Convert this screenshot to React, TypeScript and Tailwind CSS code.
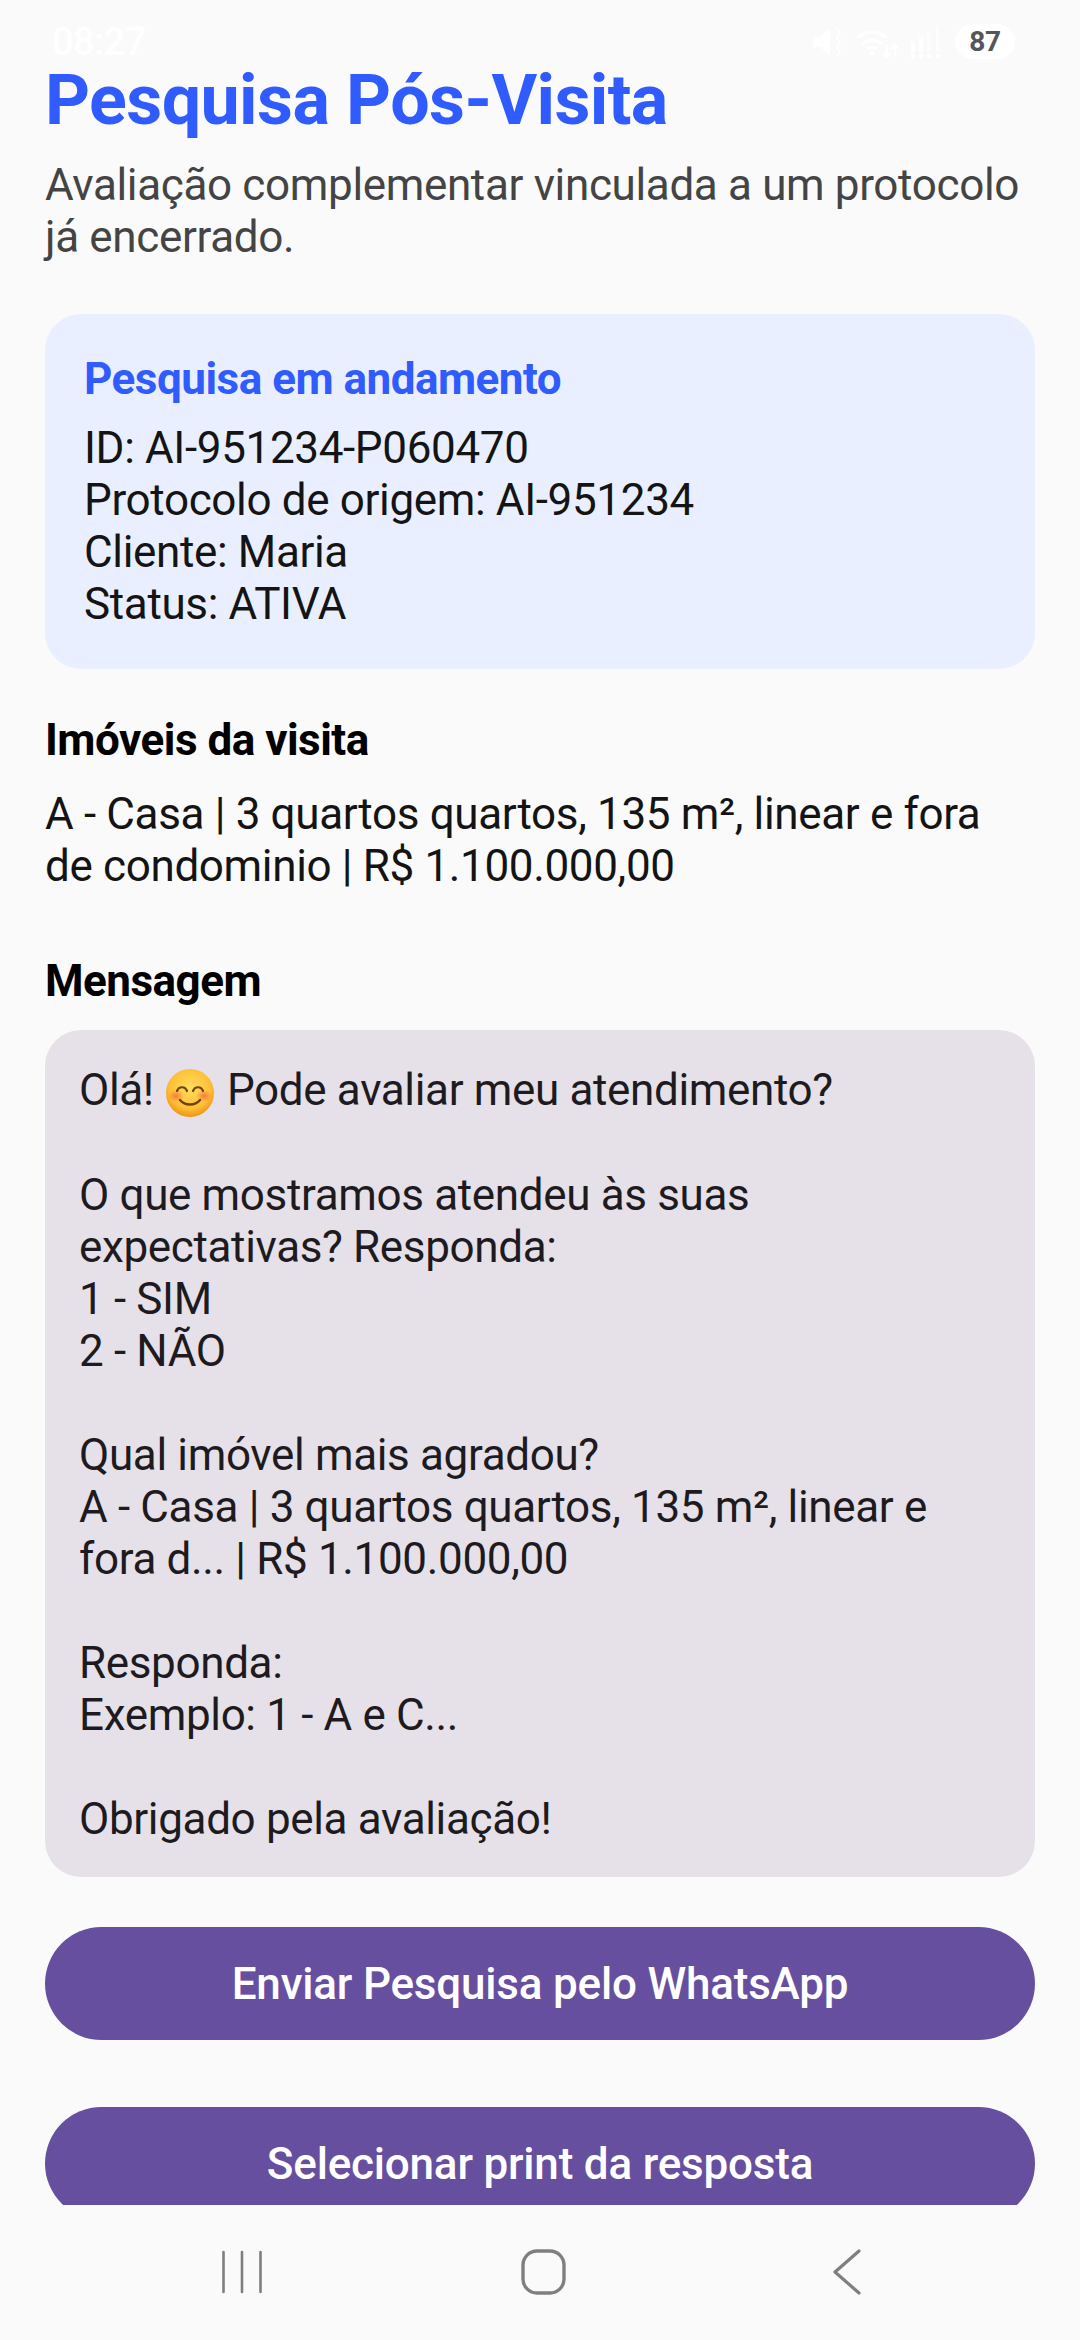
import type { ReactNode } from 'react';

// Smiling face with blush, sits inline in the message text
function SmileEmoji() {
  return (
    <svg viewBox="0 0 48 48" className="inline-block mx-[2px] w-[48px] h-[48px] align-[-12px]">
      <defs>
        <radialGradient id="face" cx="50%" cy="40%" r="60%">
          <stop offset="0%" stopColor="#ffdc5e" />
          <stop offset="72%" stopColor="#fdbf35" />
          <stop offset="100%" stopColor="#ee9216" />
        </radialGradient>
        <radialGradient id="blush">
          <stop offset="0%" stopColor="#f7693f" stopOpacity="0.8" />
          <stop offset="100%" stopColor="#f7693f" stopOpacity="0" />
        </radialGradient>
      </defs>
      <circle cx="24" cy="24" r="24" fill="url(#face)" />
      <ellipse cx="10" cy="27" rx="8" ry="6" fill="url(#blush)" />
      <ellipse cx="38" cy="27" rx="8" ry="6" fill="url(#blush)" />
      <path d="M11 22c2-5 8-5 10 0M27 22c2-5 8-5 10 0" fill="none" stroke="#6f4212" strokeWidth="2.2" strokeLinecap="round" />
      <path d="M14 31c5 6 15 6 20 0" fill="none" stroke="#6f4212" strokeWidth="2.4" strokeLinecap="round" />
    </svg>
  );
}

function StatusBar() {
  return (
    <div className="absolute inset-x-0 top-0 h-[83px] z-10 flex items-start justify-between pl-[52px] pr-[65px] pt-[24px]">
      <span className="text-[38px] leading-[36px] font-medium tracking-[-0.5px] text-white">08:27</span>
      <div className="flex items-center">
        {/* muted speaker */}
        <svg viewBox="0 0 32 32" className="w-[32px] h-[32px] text-white" fill="currentColor">
          <path d="M1 11h7l10-9v28L8 21H1z" />
          <path d="M24 2l4 5-3 4 3 5-3 5 3 5-3 4" fill="none" stroke="currentColor" strokeWidth="2" />
        </svg>
        {/* wifi 5 with activity arrows */}
        <svg viewBox="0 0 46 34" className="ml-[11px] w-[46px] h-[34px] text-white" fill="none" stroke="currentColor" strokeWidth="3">
          <path d="M2 13c9-8 21-8 30 0M7 19c6-5 14-5 20 0M12 24c3-2 7-2 10 0" />
          <circle cx="17" cy="28" r="2.5" fill="currentColor" stroke="none" />
          <path d="M32 20v12M28 28l4 4 4-4M40 32V20M36 24l4-4 4 4" strokeWidth="2" />
        </svg>
        {/* signal bars */}
        <svg viewBox="0 0 32 34" className="ml-[9px] w-[32px] h-[34px] text-white" fill="currentColor">
          <rect x="1" y="18" width="4" height="9" />
          <rect x="9" y="12" width="4" height="15" />
          <rect x="17" y="7" width="3" height="20" opacity="0.6" />
          <rect x="26" y="1" width="3" height="26" opacity="0.6" />
          <circle cx="3" cy="31" r="2" />
          <circle cx="11" cy="31" r="2" />
          <circle cx="19" cy="31" r="2" />
          <circle cx="28" cy="31" r="2" />
        </svg>
        <div className="ml-[13px] w-[60px] h-[35px] rounded-full bg-white flex items-center justify-center text-[28px] font-bold text-[#55555a] leading-none">
          87
        </div>
      </div>
    </div>
  );
}

function NavBar() {
  return (
    <div className="h-[135px] shrink-0 flex items-start pl-[222px] pt-[44px] text-[#7f7f7f]">
      <svg viewBox="0 0 40 46" className="w-[40px] h-[46px]" fill="none" stroke="currentColor" strokeWidth="2.6" strokeLinecap="round">
        <path d="M1.5 3v40M20 3v40M38.5 3v40" />
      </svg>
      <svg viewBox="0 0 45 46" className="ml-[259px] w-[45px] h-[46px]" fill="none" stroke="currentColor" strokeWidth="3.4">
        <rect x="2" y="2" width="41" height="42" rx="14" />
      </svg>
      <svg viewBox="0 0 28 46" className="ml-[267px] w-[28px] h-[46px]" fill="none" stroke="currentColor" strokeWidth="3.2" strokeLinecap="round" strokeLinejoin="round">
        <path d="M26 2L2 23l24 21" />
      </svg>
    </div>
  );
}

function ActionButton({ children }: { children: ReactNode }) {
  return (
    <button className="w-full h-[113px] shrink-0 rounded-full bg-[#674fa0] text-white text-[44px] font-medium tracking-[-0.2px] flex items-center justify-center">
      {children}
    </button>
  );
}

export default function App() {
  return (
    <div className="relative w-[1080px] h-[2340px] overflow-hidden bg-[#fafafb] flex flex-col font-['Roboto',sans-serif] tracking-[-0.35px]">
      <StatusBar />

      <div className="flex-1 min-h-0 overflow-hidden px-[45px] pt-[58px]">
        <h1 className="text-[70px] leading-[84px] font-bold tracking-[-0.6px] text-[#2f5bff]">Pesquisa Pós-Visita</h1>
        <p className="mt-[17px] text-[44px] leading-[52px] text-[#444444]">
          Avaliação complementar vinculada a um protocolo já encerrado.
        </p>

        <section className="mt-[51px] h-[355px] rounded-[36px] bg-[#e9efff] px-[39px] pt-[40px]">
          <h2 className="text-[44px] leading-[50px] font-bold tracking-[-0.5px] text-[#2f5bff]">Pesquisa em andamento</h2>
          <div className="mt-[18px] text-[44px] leading-[52px] text-[#141414]">
            <div>ID: AI-951234-P060470</div>
            <div>Protocolo de origem: AI-951234</div>
            <div>Cliente: Maria</div>
            <div>Status: ATIVA</div>
          </div>
        </section>

        <h3 className="mt-[46px] text-[44px] leading-[50px] font-bold tracking-[-0.5px] text-black">Imóveis da visita</h3>
        <p className="mt-[23px] text-[44px] leading-[52px] text-[#141414]">
          A - Casa | 3 quartos quartos, 135 m², linear e fora de condominio | R$ 1.100.000,00
        </p>

        <h3 className="mt-[64px] text-[44px] leading-[50px] font-bold tracking-[-0.5px] text-black">Mensagem</h3>
        <div className="mt-[24px] h-[847px] rounded-[36px] bg-[#e6e1e8] px-[34px] pt-[34px] text-[44px] leading-[52px] text-[#1d1b20]">
          <div>
            Olá! <SmileEmoji /> Pode avaliar meu atendimento?
          </div>
          <div className="h-[52px]" />
          <div>O que mostramos atendeu às suas expectativas? Responda:</div>
          <div>1 - SIM</div>
          <div>2 - NÃO</div>
          <div className="h-[52px]" />
          <div>Qual imóvel mais agradou?</div>
          <div>A - Casa | 3 quartos quartos, 135 m², linear e fora d... | R$ 1.100.000,00</div>
          <div className="h-[52px]" />
          <div>Responda:</div>
          <div>Exemplo: 1 - A e C...</div>
          <div className="h-[52px]" />
          <div>Obrigado pela avaliação!</div>
        </div>

        <div className="mt-[50px] flex flex-col gap-[67px]">
          <ActionButton>Enviar Pesquisa pelo WhatsApp</ActionButton>
          <ActionButton>Selecionar print da resposta</ActionButton>
        </div>
      </div>

      <NavBar />
    </div>
  );
}
